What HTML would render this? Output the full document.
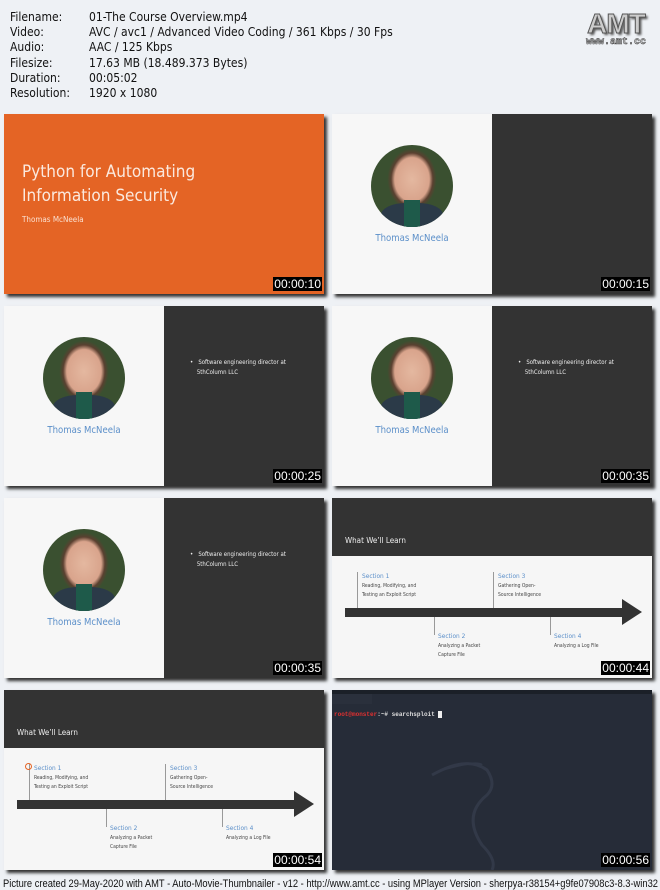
<!DOCTYPE html>
<html><head><meta charset="utf-8"><style>
body{margin:0;width:660px;height:890px;background:#eef1f5;position:relative;overflow:hidden;font-family:"Liberation Sans",sans-serif}
.info{position:absolute;left:10px;top:10px;font-size:12px;line-height:15.2px;color:#111;font-family:"DejaVu Sans Condensed","Liberation Sans Narrow","Liberation Sans",sans-serif}
.info div{white-space:nowrap}.info span{display:inline-block;width:79px}
.logo{position:absolute;right:14px;top:8px;text-align:center}
.logo .a{font:bold 28px "Liberation Sans",sans-serif;color:#ccc;-webkit-text-stroke:1px #555;letter-spacing:-1px;text-shadow:2px 2px 2px #555}
.logo .b{font:bold 10px "Liberation Mono",monospace;color:#ccc;-webkit-text-stroke:.5px #333;margin-top:-3px}
.t{position:absolute;width:320px;height:180px;box-shadow:3px 3px 3px #333;overflow:hidden}
.ts{position:absolute;right:2px;bottom:3px;background:#000;color:#fff;font-size:12px;padding:0 1px;line-height:14px;font-family:"Liberation Sans",sans-serif}
.cal{font-family:"DejaVu Sans Condensed","DejaVu Sans","Liberation Sans",sans-serif}
.l{position:absolute;left:0;top:0;width:160px;height:180px;background:#f7f7f7}
.r{position:absolute;left:160px;top:0;width:160px;height:180px;background:#333}
.c{position:absolute;left:39px;top:31px;width:82px;height:82px;border-radius:50%;background:radial-gradient(ellipse 30% 38% at 50% 42%,#e4b8a0 0,#d9a48c 70%,#5a4030 85%,#3a5030 100%),#2d3d25;overflow:hidden}
.c:after{content:"";position:absolute;left:10px;top:58px;width:62px;height:30px;border-radius:40% 40% 0 0;background:#2b3a48}
.c:before{content:"";position:absolute;left:33px;top:55px;width:16px;height:30px;background:#1e5a4a;z-index:2}
.n{position:absolute;left:0;width:160px;top:119px;text-align:center;color:#5b8fc9;font-size:9.5px}
.bul{position:absolute;left:186px;top:52px;color:#eee;font-size:6px;line-height:10px;width:120px}
.hd{position:absolute;left:0;top:0;width:320px;height:58px;background:#333;color:#eee;font-size:8px}
.hd span{position:absolute;left:13px;top:38px}
.bd{position:absolute;top:58px;left:0;width:320px;height:122px;background:#f6f6f6}
.sec{position:absolute;font-size:6.5px;color:#5b8fc9}
.sec div{color:#444;font-size:5px;line-height:8.5px;margin-top:2px}
.vl{position:absolute;width:1px;background:#999}
.ar{position:absolute;left:13px;top:110px;width:278px;height:9px;background:#333}
.ah{position:absolute;left:290px;top:101px;border-left:20px solid #333;border-top:13px solid transparent;border-bottom:13px solid transparent;width:0;height:0}
</style></head><body>
<div class="info">
<div><span>Filename:</span>01-The Course Overview.mp4</div>
<div><span>Video:</span>AVC / avc1 / Advanced Video Coding / 361 Kbps / 30 Fps</div>
<div><span>Audio:</span>AAC / 125 Kbps</div>
<div><span>Filesize:</span>17.63 MB (18.489.373 Bytes)</div>
<div><span>Duration:</span>00:05:02</div>
<div><span>Resolution:</span>1920 x 1080</div>
</div>
<div class="logo"><div class="a">AMT</div><div class="b">www.amt.cc</div></div>

<div class="t" style="left:4px;top:114px;background:#e46425">
<div class="cal" style="position:absolute;left:18px;top:46px;color:#fbe9de;font-size:17px;line-height:24px">Python for Automating<br>Information Security</div>
<div class="cal" style="position:absolute;left:18px;top:101px;color:#fbe0d0;font-size:8px">Thomas McNeela</div>
<div class="ts">00:00:10</div></div>

<div class="t" style="left:332px;top:114px"><div class="l"><div class="c"></div><div class="n cal">Thomas McNeela</div></div><div class="r"></div><div class="ts">00:00:15</div></div>

<div class="t" style="left:4px;top:306px"><div class="l"><div class="c"></div><div class="n cal">Thomas McNeela</div></div><div class="r"></div><div class="bul cal">•&nbsp;&nbsp; Software engineering director at<br>&nbsp;&nbsp;&nbsp;&nbsp;5thColumn LLC</div><div class="ts">00:00:25</div></div>

<div class="t" style="left:332px;top:306px"><div class="l"><div class="c"></div><div class="n cal">Thomas McNeela</div></div><div class="r"></div><div class="bul cal">•&nbsp;&nbsp; Software engineering director at<br>&nbsp;&nbsp;&nbsp;&nbsp;5thColumn LLC</div><div class="ts">00:00:35</div></div>

<div class="t" style="left:4px;top:498px"><div class="l"><div class="c"></div><div class="n cal">Thomas McNeela</div></div><div class="r"></div><div class="bul cal">•&nbsp;&nbsp; Software engineering director at<br>&nbsp;&nbsp;&nbsp;&nbsp;5thColumn LLC</div><div class="ts">00:00:35</div></div>

<div class="t cal" style="left:332px;top:498px"><div class="hd"><span>What We’ll Learn</span></div><div class="bd"></div>
<div class="vl" style="left:25px;top:74px;height:38px"></div><div class="vl" style="left:161px;top:74px;height:38px"></div>
<div class="vl" style="left:102px;top:119px;height:18px"></div><div class="vl" style="left:218px;top:119px;height:18px"></div>
<div class="sec" style="left:30px;top:74px">Section 1<div>Reading, Modifying, and<br>Testing an Exploit Script</div></div>
<div class="sec" style="left:166px;top:74px">Section 3<div>Gathering Open-<br>Source Intelligence</div></div>
<div class="sec" style="left:106px;top:134px">Section 2<div>Analyzing a Packet<br>Capture File</div></div>
<div class="sec" style="left:222px;top:134px">Section 4<div>Analyzing a Log File</div></div>
<div class="ar"></div><div class="ah"></div><div class="ts">00:00:44</div></div>

<div class="t cal" style="left:4px;top:690px"><div class="hd"><span>What We’ll Learn</span></div><div class="bd"></div>
<div class="vl" style="left:25px;top:74px;height:38px"></div><div class="vl" style="left:161px;top:74px;height:38px"></div>
<div class="vl" style="left:102px;top:119px;height:18px"></div><div class="vl" style="left:218px;top:119px;height:18px"></div>
<div style="position:absolute;left:21px;top:73px;width:5px;height:5px;border:1px solid #e46425;border-radius:50%"></div>
<div class="sec" style="left:30px;top:74px">Section 1<div>Reading, Modifying, and<br>Testing an Exploit Script</div></div>
<div class="sec" style="left:166px;top:74px">Section 3<div>Gathering Open-<br>Source Intelligence</div></div>
<div class="sec" style="left:106px;top:134px">Section 2<div>Analyzing a Packet<br>Capture File</div></div>
<div class="sec" style="left:222px;top:134px">Section 4<div>Analyzing a Log File</div></div>
<div class="ar"></div><div class="ah"></div><div class="ts">00:00:54</div></div>

<div class="t" style="left:332px;top:690px;background:#262c38">
<div style="position:absolute;left:0;top:0;width:320px;height:4px;background:#1b2028"></div>
<div style="position:absolute;left:0;top:4px;width:40px;height:10px;background:#2a303c"></div>
<div style="position:absolute;left:2px;top:21px;font:bold 6px 'Liberation Mono',monospace;color:#ddd"><span style="color:#e03030">root@monster</span>:~# searchsploit <span style="background:#eee">&nbsp;</span></div>
<svg style="position:absolute;left:95px;top:55px" width="120" height="130"><path d="M5 30 Q40 10 60 25 Q70 40 60 50 Q35 70 55 100 Q70 115 65 125" fill="none" stroke="#323948" stroke-width="3"/><path d="M15 25 Q50 15 55 20" fill="none" stroke="#323948" stroke-width="2"/></svg>
<div class="ts">00:00:56</div></div>

<svg style="position:absolute;left:0;top:876px" width="660" height="14"><text x="3" y="11" textLength="655" lengthAdjust="spacingAndGlyphs" font-family="Liberation Sans, sans-serif" font-size="11" fill="#111">Picture created 29-May-2020 with AMT - Auto-Movie-Thumbnailer - v12 - http://www.amt.cc - using MPlayer Version - sherpya-r38154+g9fe07908c3-8.3-win32</text></svg>
</body></html>
